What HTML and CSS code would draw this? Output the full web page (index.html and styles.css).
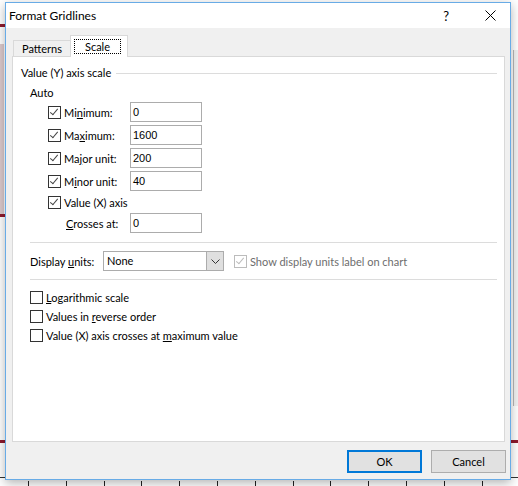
FILE: index.html
```html
<!DOCTYPE html>
<html>
<head>
<meta charset="utf-8">
<title>Format Gridlines</title>
<link rel="stylesheet" href="styles.css">
</head>
<body>
<div class="desk">
  <div class="bg-band"></div>
  <div class="bg-red r1"></div>
  <div class="bg-red r2"></div>
  <div class="bg-red r3"></div>
  <div class="bg-red r4"></div>
  <div class="bg-rightbar"></div>
  <div class="bg-hline h1"></div>
  <div class="bg-hline h2"></div>
  <div class="bg-ticks">
    <i></i><i></i><i></i><i></i><i></i><i></i><i></i><i></i><i></i><i></i><i></i><i></i><i></i>
  </div>

  <div class="dialog">
    <div class="titlebar">
      <span class="title">Format Gridlines</span>
      <span class="help">?</span>
      <svg class="close" width="11" height="11" viewBox="0 0 11 11"><path d="M0.5 0.5 L10.5 10.5 M10.5 0.5 L0.5 10.5" stroke="#000" stroke-width="1" fill="none"/></svg>
    </div>
    <div class="client">
      <div class="tabs">
        <div class="tab">Patterns</div>
        <div class="tab active"><span class="focus">Scale</span></div>
      </div>
      <div class="panel">
        <div class="group-head"><span>Value (Y) axis scale</span><div class="rule"></div></div>
        <div class="auto">Auto</div>
        <div class="rows">
          <div class="row">
            <div class="chk-lbl"><span class="cb on"></span><span>Mi<u>n</u>imum:</span></div>
            <div class="field">0</div>
          </div>
          <div class="row">
            <div class="chk-lbl"><span class="cb on"></span><span>Ma<u>x</u>imum:</span></div>
            <div class="field">1600</div>
          </div>
          <div class="row">
            <div class="chk-lbl"><span class="cb on"></span><span>Ma<u>j</u>or unit:</span></div>
            <div class="field">200</div>
          </div>
          <div class="row">
            <div class="chk-lbl"><span class="cb on"></span><span>M<u>i</u>nor unit:</span></div>
            <div class="field">40</div>
          </div>
          <div class="row short">
            <div class="chk-lbl"><span class="cb on"></span><span>Value (X) axis</span></div>
          </div>
          <div class="row crosses">
            <div class="plain-lbl"><u>C</u>rosses at:</div>
            <div class="field">0</div>
          </div>
        </div>
        <div class="sep"></div>
        <div class="units">
          <div class="units-lbl">Display <u>u</u>nits:</div>
          <div class="select"><span class="sel-text">None</span><span class="sel-btn"><svg width="9" height="5" viewBox="0 0 9 5"><path d="M0.5 0.5 L4.5 4.5 L8.5 0.5" stroke="#333" fill="none"/></svg></span></div>
          <div class="disabled-opt"><span class="cb on dis"></span><span>Show display units label on chart</span></div>
        </div>
        <div class="sep sep2"></div>
        <div class="options">
          <div class="opt"><span class="cb"></span><span><u>L</u>ogarithmic scale</span></div>
          <div class="opt"><span class="cb"></span><span>Values in <u>r</u>everse order</span></div>
          <div class="opt"><span class="cb"></span><span>Value (X) axis crosses at <u>m</u>aximum value</span></div>
        </div>
      </div>
      <div class="buttons">
        <div class="btn default">OK</div>
        <div class="btn">Cancel</div>
      </div>
    </div>
  </div>
</div>
</body>
</html>
```

FILE: styles.css
```css
html, body {
  margin: 0;
  padding: 0;
}
body {
  width: 518px;
  height: 486px;
  overflow: hidden;
  background: #ffffff;
  font-family: Lato, "Noto Sans", sans-serif;
  font-size: 11px;
  color: #000;
  white-space: nowrap;
}
.desk {
  position: relative;
  width: 518px;
  height: 486px;
}

/* background sheet fragments */
.bg-band {
  position: absolute;
  left: 0; top: 44px;
  width: 4px; height: 170px;
  background: #dcc9cc;
}
.bg-red {
  position: absolute;
  height: 3px;
  background: #8e1b2e;
}
.bg-red.r1 { left: 0; top: 24px; width: 5px; }
.bg-red.r2 { left: 0; top: 214px; width: 5px; }
.bg-red.r3 { left: 0; top: 440px; width: 5px; }
.bg-red.r4 { left: 511px; top: 440px; width: 7px; }
.bg-rightbar {
  position: absolute;
  left: 513px; top: 50px;
  width: 5px; height: 356px;
  background: #f2f2f2;
  border-left: 1px solid #b8b8b8;
}
.bg-hline {
  position: absolute;
  height: 1px;
  background: #333;
}
.bg-hline.h1 { left: 0; top: 477px; width: 5px; }
.bg-hline.h2 { left: 511px; top: 477px; width: 7px; }
.bg-ticks {
  position: absolute;
  left: 0; top: 481px;
  width: 518px; height: 5px;
  display: flex;
  padding-left: 28px;
  gap: 36.8px;
  box-sizing: border-box;
}
.bg-ticks i {
  display: block;
  width: 1px;
  height: 5px;
  background: #222;
}

/* dialog window */
.dialog {
  position: absolute;
  left: 5px;
  top: 2px;
  width: 506px;
  height: 478px;
  box-sizing: border-box;
  border: 1px solid #68abe6;
  background: #f0f0f0;
  box-shadow: 0 3px 10px rgba(0, 0, 0, 0.3);
  display: flex;
  flex-direction: column;
}
.titlebar {
  height: 25px;
  flex: none;
  background: #fff;
  display: flex;
  align-items: center;
  padding-left: 3px;
  font-size: 12px;
}
.title {
  flex: 1;
}
.help {
  margin-right: 36px;
  font-size: 13px;
}
.close {
  margin-right: 14px;
}

.client {
  flex: 1;
  display: flex;
  flex-direction: column;
  padding: 7px 5px 0 6px;
}
.tabs {
  display: flex;
  align-items: flex-end;
  padding-left: 1px;
  height: 21px;
  position: relative;
  z-index: 1;
}
.tab {
  box-sizing: border-box;
  height: 16px;
  width: 57px;
  border: 1px solid #d9d9d9;
  border-bottom: none;
  border-right: none;
  background: #f0f0f0;
  display: flex;
  align-items: center;
  justify-content: center;
  line-height: 14px;
}
.tab.active {
  height: 22px;
  width: 58px;
  margin-bottom: -1px;
  background: #fff;
  border-right: 1px solid #d9d9d9;
  align-items: flex-start;
  justify-content: flex-start;
  padding: 3px 0 0 3px;
}
.focus {
  display: block;
  box-sizing: border-box;
  width: 47px;
  height: 15px;
  border: 1px dotted #000;
  text-align: center;
  line-height: 13px;
}

.panel {
  box-sizing: border-box;
  height: 386px;
  border: 1px solid #d9d9d9;
  background: #fff;
  display: flex;
  flex-direction: column;
}
.group-head {
  margin-top: 8px;
  height: 16px;
  line-height: 16px;
  padding-left: 8px;
  padding-right: 7px;
  display: flex;
  align-items: center;
}
.rule {
  flex: 1;
  height: 1px;
  background: #dcdcdc;
  margin-left: 5px;
}
.auto {
  margin-top: 4px;
  height: 16px;
  line-height: 16px;
  padding-left: 17px;
}
.rows {
  margin-top: 1px;
  display: flex;
  flex-direction: column;
  gap: 3px;
}
.row {
  height: 20px;
  display: flex;
  align-items: center;
  padding-left: 35px;
}
.row.short {
  height: 16px;
}
.chk-lbl {
  width: 82px;
  display: flex;
  align-items: center;
  gap: 3px;
}
.plain-lbl {
  width: 64px;
}
.row.crosses {
  padding-left: 53px;
}
.field {
  box-sizing: border-box;
  width: 72px;
  height: 20px;
  border: 1px solid #acacac;
  background: #fff;
  padding-left: 2px;
  font-family: "Liberation Sans", Arial, sans-serif;
  font-size: 11px;
  line-height: 18px;
}

.cb {
  box-sizing: border-box;
  flex: none;
  width: 13px;
  height: 13px;
  border: 1px solid #333;
  background: #fff;
  position: relative;
}
.cb.on::after {
  content: "";
  position: absolute;
  left: 3px;
  top: 0px;
  width: 3px;
  height: 7px;
  border-right: 1px solid #444;
  border-bottom: 1px solid #444;
  transform: rotate(40deg);
  transform-origin: center;
}
.cb.dis {
  border-color: #bcbcbc;
}
.cb.dis::after {
  border-color: #bcbcbc;
}

.sep {
  margin-top: 9px;
  height: 1px;
  background: #dcdcdc;
  margin-left: 17px;
  margin-right: 7px;
}
.sep2 {
  margin-top: 8px;
}
.units {
  margin-top: 8px;
  height: 20px;
  display: flex;
  align-items: center;
  padding-left: 17px;
}
.units-lbl {
  width: 73px;
}
.select {
  box-sizing: border-box;
  width: 121px;
  height: 20px;
  border: 1px solid #acacac;
  display: flex;
  align-items: stretch;
}
.sel-text {
  flex: 1;
  padding-left: 3px;
  line-height: 18px;
}
.sel-btn {
  width: 16px;
  background: #dfdfdf;
  border-left: 1px solid #acacac;
  display: flex;
  align-items: center;
  justify-content: center;
}
.disabled-opt {
  margin-left: 10px;
  display: flex;
  align-items: center;
  gap: 3px;
  color: #6d6d6d;
}
.options {
  margin-top: 8px;
  display: flex;
  flex-direction: column;
}
.opt {
  height: 19px;
  display: flex;
  align-items: center;
  gap: 3px;
  padding-left: 17px;
}

.buttons {
  margin-top: 8px;
  margin-right: -1px;
  display: flex;
  justify-content: flex-end;
  gap: 9px;
}
.btn {
  box-sizing: border-box;
  width: 75px;
  height: 23px;
  border: 1px solid #adadad;
  background: #e1e1e1;
  display: flex;
  align-items: center;
  justify-content: center;
}
.btn.default {
  border: 2px solid #0078d7;
}
```
